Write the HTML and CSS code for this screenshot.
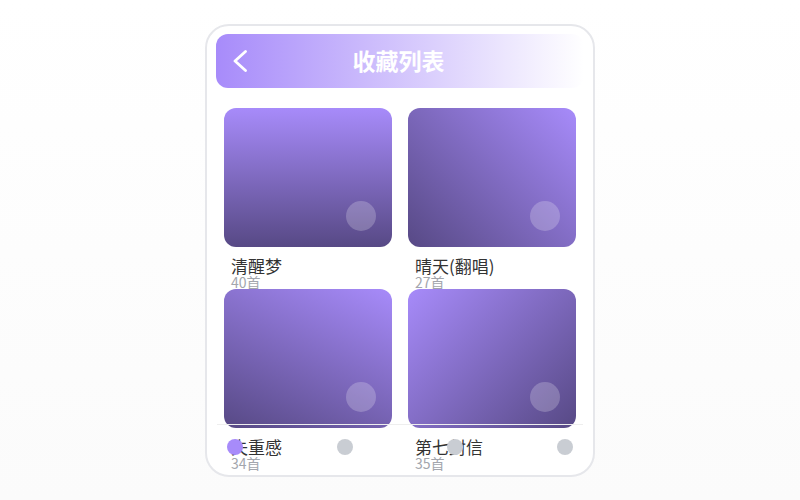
FILE: index.html
```html
<!DOCTYPE html>
<html lang="zh">
<head>
<meta charset="utf-8">
<title>收藏列表</title>
<link rel="stylesheet" href="styles.css">
</head>
<body>
<div class="phone">
  <header class="header">
    <span class="back">
      <svg width="14" height="22" viewBox="0 0 14 22"><polyline points="12.5,1.5 2,11 12.5,20.5" fill="none" stroke="#fff" stroke-width="2.8" stroke-linecap="round" stroke-linejoin="round"/></svg>
    </span>
    <h1 class="title">收藏列表</h1>
    <span class="spacer"></span>
  </header>
  <main class="grid">
    <div class="card">
      <div class="cover cover-a"><span class="play"></span></div>
      <div class="info"><div class="name">清醒梦</div><div class="count">40首</div></div>
    </div>
    <div class="card">
      <div class="cover cover-b"><span class="play"></span></div>
      <div class="info"><div class="name">晴天(翻唱)</div><div class="count">27首</div></div>
    </div>
    <div class="card">
      <div class="cover cover-c"><span class="play"></span></div>
      <div class="info"><div class="name">失重感</div><div class="count">34首</div></div>
    </div>
    <div class="card">
      <div class="cover cover-d"><span class="play"></span></div>
      <div class="info"><div class="name">第七封信</div><div class="count">35首</div></div>
    </div>
  </main>
  <nav class="tabbar">
    <span class="dot active"></span>
    <span class="dot"></span>
    <span class="dot"></span>
    <span class="dot"></span>
  </nav>
</div>
</body>
</html>
```

FILE: styles.css
```css
* { box-sizing: border-box; }
html, body { margin: 0; padding: 0; }
body {
  height: 100vh;
  display: flex;
  align-items: center;
  justify-content: center;
  background: linear-gradient(#ffffff, #fbfbfb);
  font-family: "Noto Sans CJK SC", "Noto Sans", sans-serif;
}
.phone {
  position: relative;
  width: 390px;
  height: 453px;
  border: 2px solid #e6e7eb;
  border-radius: 24px;
  padding: 8px 9px;
  background: #fff;
  overflow: hidden;
}
.header {
  height: 54px;
  border-radius: 12px;
  background: linear-gradient(90deg, #a78bfa, #ffffff);
  display: grid;
  grid-template-columns: 40px 1fr 40px;
  align-items: center;
  padding: 0 0 0 17px;
}
.back { display: flex; align-items: center; }
.title {
  margin: 0;
  text-align: center;
  color: #fff;
  font-size: 23px;
  font-weight: 700;
  line-height: 1;
  padding-right: 20px;
}
.grid {
  margin-top: 20px;
  padding: 0 8px;
  display: grid;
  grid-template-columns: 1fr 1fr;
  column-gap: 16px;
  row-gap: 16px;
  grid-auto-rows: 165px;
}
.card { display: flex; flex-direction: column; }
.cover {
  position: relative;
  height: 139px;
  border-radius: 12px;
  flex-shrink: 0;
}
.cover-a { background: linear-gradient(180deg, #a78bfa, #574985); }
.cover-b { background: linear-gradient(225deg, #a78bfa, #574985); }
.cover-c { background: linear-gradient(205deg, #a78bfa, #574985); }
.cover-d { background: linear-gradient(135deg, #a78bfa, #574985); }
.play {
  position: absolute;
  right: 16px;
  bottom: 16px;
  width: 30px;
  height: 30px;
  border-radius: 50%;
  background: rgba(255, 255, 255, 0.22);
}
.info { padding: 9px 7px 0; }
.name {
  font-size: 17px;
  line-height: 20px;
  color: #333;
}
.count {
  font-size: 14px;
  line-height: 15px;
  margin-top: -1px;
  color: #a3a6ad;
}
.tabbar {
  position: absolute;
  left: 10px;
  right: 10px;
  bottom: 6px;
  height: 45px;
  border-top: 1px solid #eeeeee;
  display: flex;
  align-items: center;
  justify-content: space-between;
  padding: 0 10px;
}
.dot {
  width: 16px;
  height: 16px;
  border-radius: 50%;
  background: #c9cdd3;
}
.dot.active { background: #a78bfa; }
```
